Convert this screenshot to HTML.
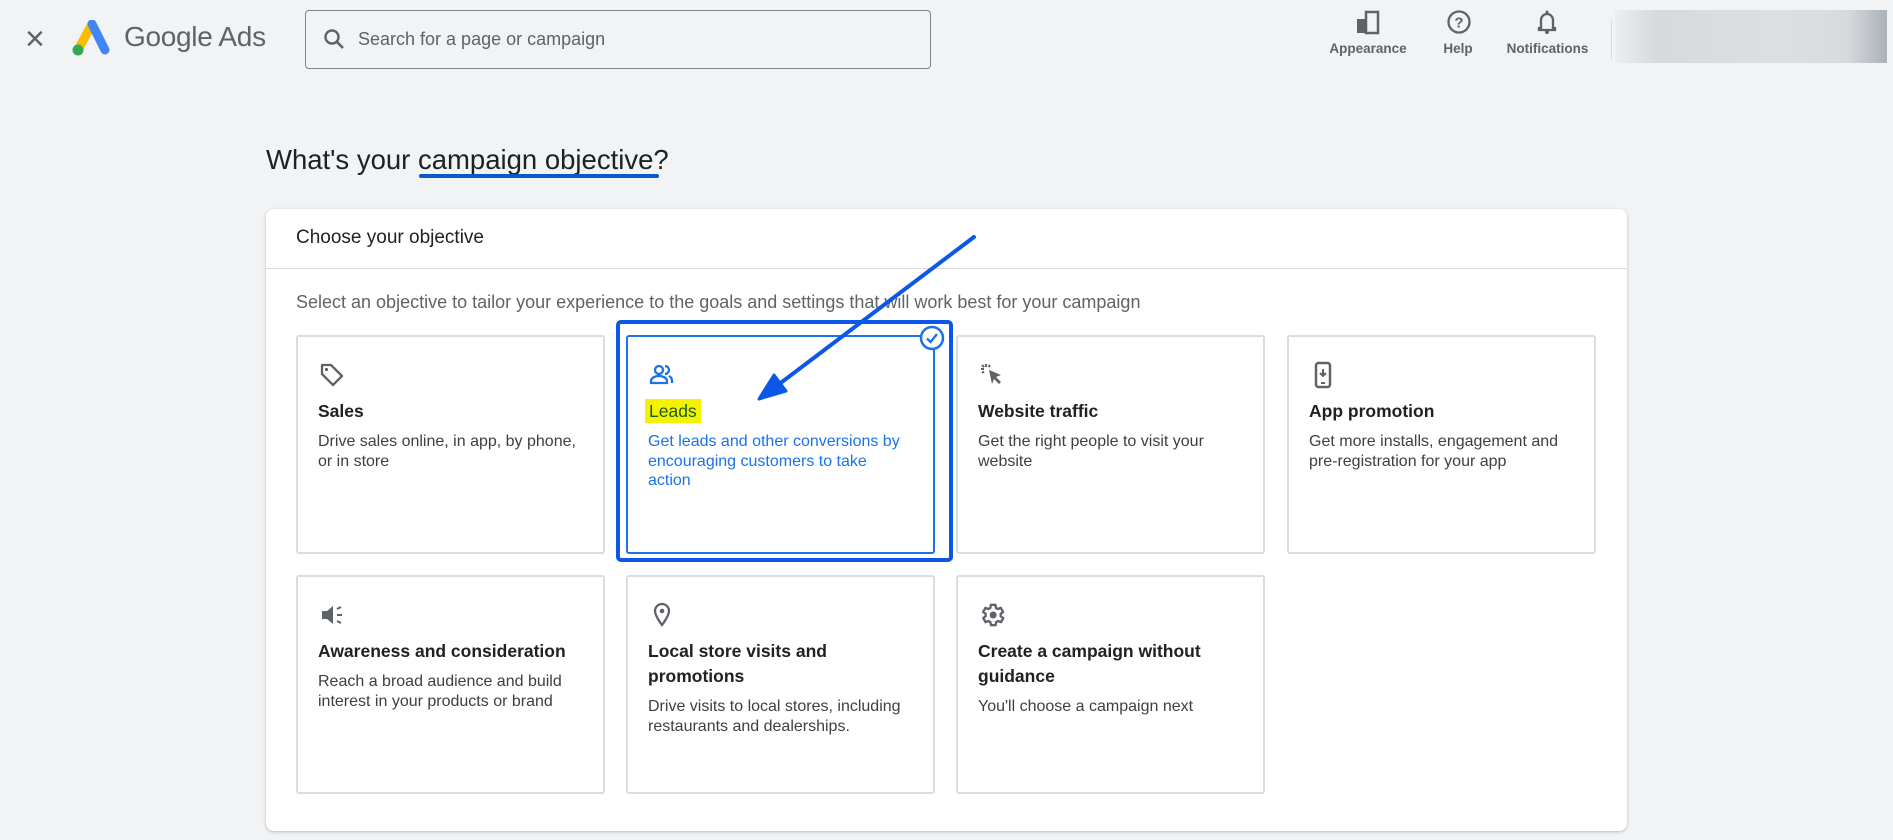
<!DOCTYPE html>
<html><head><style>
*{margin:0;padding:0;box-sizing:border-box}
body{width:1893px;height:840px;background:#f1f3f4;font-family:"Liberation Sans",Arial,sans-serif;position:relative;overflow:hidden;color:#202124}
.a{position:absolute}
.tile{position:absolute;width:309px;height:219px;background:#fff;border:2px solid #dadce0;border-radius:3px}
.tile .ic{position:absolute;left:20px;top:24px;width:28px;height:28px}
.tile h3{position:absolute;left:20px;top:62px;font-size:17.5px;font-weight:bold;color:#202124;line-height:25px;width:260px}
.tile p{position:absolute;left:20px;top:95px;font-size:16px;color:#3c4043;line-height:19.5px;width:262px}
.tile.two p{top:120px}
.hl{position:absolute;text-align:center;font-size:13.5px;color:#5f6368;font-weight:bold}
</style></head><body>
<!-- header -->
<div class="a" style="left:25px;top:22px;font-size:34px;color:#5f6368;line-height:34px">×</div>
<svg class="a" style="left:70px;top:20px" width="42" height="38" viewBox="0 0 42 38">
<path d="M22 4 L8 30" stroke="#fbbc04" stroke-width="9" stroke-linecap="round"/>
<path d="M22 4 L35 30" stroke="#4285f4" stroke-width="9" stroke-linecap="round"/>
<circle cx="8" cy="30" r="5.5" fill="#34a853"/></svg>
<div class="a" style="left:124px;top:21px;font-size:28px;color:#5f6368;letter-spacing:-0.3px">Google Ads</div>
<div class="a" style="left:305px;top:10px;width:626px;height:59px;border:1px solid #80868b;border-radius:4px;background:#f1f3f4"></div>
<svg class="a" style="left:322px;top:27px" width="24" height="24" viewBox="0 0 24 24"><circle cx="10" cy="10" r="6.5" fill="none" stroke="#5f6368" stroke-width="2.4"/><path d="M15 15l6 6" stroke="#5f6368" stroke-width="2.6"/></svg>
<div class="a" style="left:358px;top:29px;font-size:18px;color:#5f6368">Search for a page or campaign</div>
<svg class="a" style="left:1355px;top:9px" width="26" height="26" viewBox="0 0 26 26"><rect x="2" y="10" width="10" height="14" fill="#5f6368"/><rect x="11" y="3" width="12" height="21" fill="none" stroke="#5f6368" stroke-width="2.5"/></svg>
<div class="hl" style="left:1318px;top:41px;width:100px">Appearance</div>
<svg class="a" style="left:1446px;top:9px" width="26" height="26" viewBox="0 0 26 26"><circle cx="13" cy="13" r="10.5" fill="none" stroke="#5f6368" stroke-width="2.3"/><text x="13" y="18.5" text-anchor="middle" font-size="15" font-weight="bold" fill="#5f6368" font-family="Liberation Sans">?</text></svg>
<div class="hl" style="left:1428px;top:41px;width:60px">Help</div>
<svg class="a" style="left:1535px;top:8px" width="24" height="28" viewBox="0 0 24 28"><path d="M6 20V12a6 6 0 0 1 12 0v8h2v2H4v-2z" fill="none" stroke="#5f6368" stroke-width="2.3"/><circle cx="12" cy="4" r="1.5" fill="#5f6368"/><circle cx="12" cy="24" r="2" fill="#5f6368"/></svg>
<div class="hl" style="left:1495px;top:41px;width:105px">Notifications</div>
<div class="a" style="left:1611px;top:19px;width:1px;height:40px;background:#dadce0"></div>
<div class="a" style="left:1615px;top:10px;width:272px;height:53px;background:linear-gradient(90deg,#eceeef,#d7dadc 15%,#dcdfe0 60%,#d8dbdd 85%,#a9b2b8)"></div>
<!-- title -->
<div class="a" style="left:266px;top:144px;font-size:27.5px;color:#202124">What's your campaign objective?</div>
<div class="a" style="left:419px;top:174px;width:240px;height:4px;background:#0b57d0;border-radius:2px"></div>
<!-- card -->
<div class="a" style="left:266px;top:209px;width:1361px;height:622px;background:#fff;border-radius:8px;box-shadow:0 1px 3px rgba(60,64,67,.3)"></div>
<div class="a" style="left:296px;top:227px;font-size:19px;color:#202124">Choose your objective</div>
<div class="a" style="left:266px;top:268px;width:1361px;height:1px;background:#dadce0"></div>
<div class="a" style="left:296px;top:292px;font-size:18px;color:#5f6368">Select an objective to tailor your experience to the goals and settings that will work best for your campaign</div>

<div class="tile" style="left:296px;top:335px">
<svg class="ic" viewBox="0 0 28 28"><path d="M4 4h9l11 11-9 9L4 13z" fill="none" stroke="#5f6368" stroke-width="2.3" stroke-linejoin="round"/><circle cx="8.5" cy="8.5" r="1.6" fill="#5f6368"/></svg>
<h3>Sales</h3><p>Drive sales online, in app, by phone, or in store</p></div>

<div class="tile" style="left:626px;top:335px;border-color:#1a73e8">
<svg class="ic" viewBox="0 0 28 28"><circle cx="11" cy="9" r="4" fill="none" stroke="#1a73e8" stroke-width="2.3"/><path d="M3 22v-2c0-3 4-5 8-5s8 2 8 5v2z" fill="none" stroke="#1a73e8" stroke-width="2.3"/><path d="M17 5a4 4 0 0 1 0 8M21 15c2 1 3 2.5 3 5v2" fill="none" stroke="#1a73e8" stroke-width="2.3"/></svg>
<div class="a" style="left:17px;top:62px;width:56px;height:24px;background:#f5f200"></div>
<h3 style="color:#1a5a1a;font-weight:normal;left:21px">Leads</h3>
<p style="color:#1a73e8">Get leads and other conversions by encouraging customers to take action</p></div>

<div class="tile" style="left:956px;top:335px">
<svg class="ic" viewBox="0 0 28 28"><path d="M11 9l12 5-5 2 5 5-2 2-5-5-2 5z" fill="#5f6368"/><path d="M8 3v3M3 8h3M4 4l2 2M12 4l-1.5 2M4 12l2-1.5" stroke="#5f6368" stroke-width="2"/></svg>
<h3>Website traffic</h3><p>Get the right people to visit your website</p></div>

<div class="tile" style="left:1287px;top:335px">
<svg class="ic" viewBox="0 0 28 28"><rect x="7" y="2" width="14" height="24" rx="2.5" fill="none" stroke="#5f6368" stroke-width="2.5"/><path d="M14 8v7M11 12l3 3 3-3" fill="none" stroke="#5f6368" stroke-width="2"/><path d="M12 22h4" stroke="#5f6368" stroke-width="2"/></svg>
<h3>App promotion</h3><p>Get more installs, engagement and pre-registration for your app</p></div>

<div class="tile two" style="left:296px;top:575px">
<svg class="ic" viewBox="0 0 28 28"><path d="M4 10h5l6-5v18l-6-5H4z" fill="#5f6368"/><path d="M19 14h5M19 8l4-2M19 20l4 2" stroke="#5f6368" stroke-width="2"/></svg>
<h3>Awareness and consideration</h3><p style="top:95px">Reach a broad audience and build interest in your products or brand</p></div>

<div class="tile two" style="left:626px;top:575px">
<svg class="ic" viewBox="0 0 28 28"><path d="M14 3a7 7 0 0 1 7 7c0 5-7 14-7 14S7 15 7 10a7 7 0 0 1 7-7z" fill="none" stroke="#5f6368" stroke-width="2.3"/><circle cx="14" cy="10" r="2.3" fill="#5f6368"/></svg>
<h3>Local store visits and promotions</h3><p>Drive visits to local stores, including restaurants and dealerships.</p></div>

<div class="tile two" style="left:956px;top:575px">
<svg class="ic" viewBox="0 0 24 24" style="width:28px;height:28px"><path d="M19.4 13a7.5 7.5 0 0 0 0-2l2.1-1.6-2-3.5-2.5 1a7.3 7.3 0 0 0-1.7-1L15 3.3h-4l-.4 2.6a7.3 7.3 0 0 0-1.7 1l-2.5-1-2 3.5L6.6 11a7.5 7.5 0 0 0 0 2l-2.1 1.6 2 3.5 2.5-1c.5.4 1.1.7 1.7 1l.4 2.6h4l.4-2.6c.6-.3 1.2-.6 1.7-1l2.5 1 2-3.5z" fill="none" stroke="#5f6368" stroke-width="2" stroke-linejoin="round"/><circle cx="13" cy="12" r="3" fill="#5f6368"/></svg>
<h3>Create a campaign without guidance</h3><p>You'll choose a campaign next</p></div>

<!-- selection box -->
<div class="a" style="left:616px;top:320px;width:337px;height:242px;border:4px solid #0b57e8;border-radius:5px"></div>
<svg class="a" style="left:919px;top:325px" width="26" height="26" viewBox="0 0 26 26"><circle cx="13" cy="13" r="11" fill="#fff" stroke="#1a73e8" stroke-width="2.5"/><path d="M8 13.5l3.5 3.5L18 9" fill="none" stroke="#1a73e8" stroke-width="2.3"/></svg>
<!-- arrow -->
<svg class="a" style="left:0;top:0" width="1893" height="840"><path d="M974 237L770 391" stroke="#0b57e8" stroke-width="4" stroke-linecap="round"/><path d="M759 399L774 375L786 391z" fill="#0b57e8" stroke="#0b57e8" stroke-width="3" stroke-linejoin="round"/></svg>
</body></html>
